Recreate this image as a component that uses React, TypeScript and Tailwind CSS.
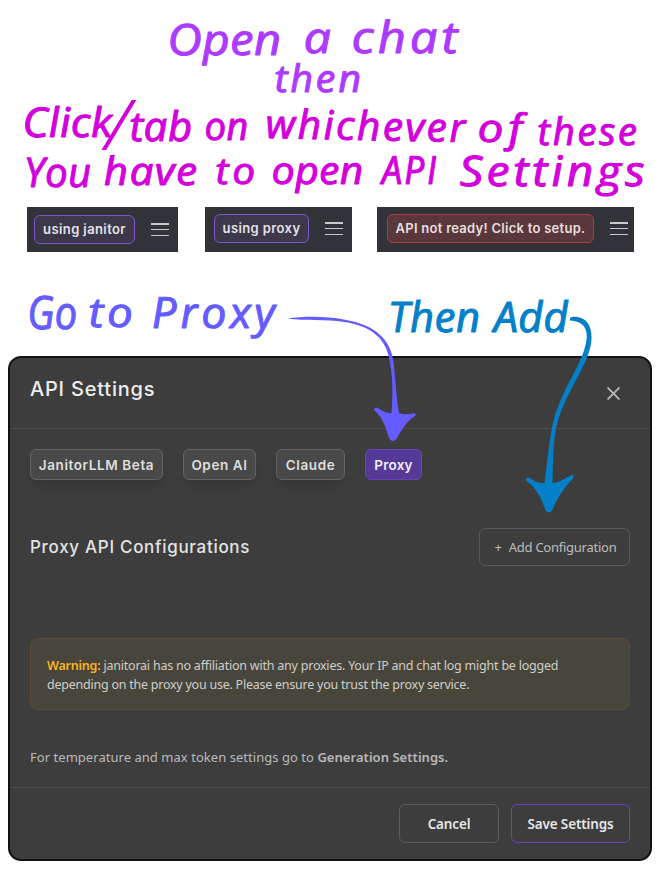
import React from "react";

type WordProps = {
  children: string;
  x: number;
  y: number;
  w: number;
  size: number;
  tilt?: number;
  gap?: number;
};

function Word({ children, x, y, w, size, tilt = 0, gap = 0 }: WordProps) {
  return (
    <text
      x={0}
      y={0}
      textLength={w}
      lengthAdjust="spacingAndGlyphs"
      letterSpacing={gap}
      fontSize={size}
      transform={`translate(${x + 1} ${y}) rotate(${tilt}) skewX(3)`}
    >
      {children}
    </text>
  );
}

function Menu() {
  return (
    <div className="flex h-[13px] w-[18px] flex-col justify-between">
      <div className="h-[1.5px] bg-[#c9cac9]" />
      <div className="h-[1.5px] bg-[#c9cac9]" />
      <div className="h-[1.5px] bg-[#c9cac9]" />
    </div>
  );
}

const hand =
  "font-['Open_Sans','Noto_Sans',sans-serif] italic [stroke-linejoin:round] block overflow-visible";
const tech = "font-['Inter','Roboto',sans-serif]";
const tab =
  "flex h-[31px] items-center justify-center rounded-md border border-[#646464] bg-[#494949] pt-[2px] text-[13.5px] font-semibold text-[#dedede] shadow-lg whitespace-nowrap";

export default function App() {
  return (
    <div className="h-[880px] w-[660px] overflow-hidden bg-white font-['Noto_Sans','Open_Sans',sans-serif]">
      <svg width="660" height="207" viewBox="0 0 660 207" className={hand}>
        <g fill="#ad3bff" stroke="#ad3bff" strokeWidth="1">
          <Word x={167} y={55} w={114} size={43}>Open</Word>
          <Word x={303} y={53} w={28} size={43}>a</Word>
          <Word x={351} y={53} w={110} size={44} gap={3}>chat</Word>
          <Word x={274} y={92} w={89} size={38} gap={2}>then</Word>
        </g>
        <g fill="#d400dc" stroke="#d400dc" strokeWidth="1">
          <Word x={22} y={137} w={90} size={41}>Click</Word>
          <text x={0} y={0} fontSize={70} strokeWidth={0} transform="translate(104 150) skewX(-9) scale(.8 1)">/</text>
          <Word x={129} y={141} w={63} size={41}>tab</Word>
          <Word x={204} y={140} w={44} size={39}>on</Word>
          <Word x={265} y={138} w={202} size={40} tilt={1.2} gap={2}>whichever</Word>
          <Word x={477} y={142} w={50} size={39} gap={4}>of</Word>
          <Word x={537} y={145} w={102} size={38} gap={2}>these</Word>
          <Word x={24} y={187} w={67} size={41}>You</Word>
          <Word x={103} y={185} w={95} size={39} gap={1}>have</Word>
          <Word x={215} y={184} w={43} size={37} gap={3}>to</Word>
          <Word x={271} y={184} w={92} size={38}>open</Word>
          <Word x={381} y={184} w={57} size={39} gap={2}>API</Word>
          <Word x={459} y={186} w={189} size={42} gap={3}>Settings</Word>
        </g>
      </svg>

      <div className={`flex h-[45px] pl-[27px] ${tech}`}>
        <div className="flex w-[151px] items-center justify-between bg-[#323338] pr-[9px] pl-[7px]">
          <div className="flex h-[29px] w-[101px] items-center justify-center rounded-md border border-[#7d57cf] bg-[#3d374a] text-[13px] font-semibold tracking-[0.4px] whitespace-nowrap text-[#e4e2e8]">
            using janitor
          </div>
          <Menu />
        </div>
        <div className="ml-[27px] flex w-[147px] items-center justify-between bg-[#323338] pr-[9px] pb-[2px] pl-[9px]">
          <div className="flex h-[29px] w-[95px] items-center justify-center rounded-md border border-[#7d57cf] bg-[#3d374a] text-[13px] font-semibold tracking-[0.4px] whitespace-nowrap text-[#e4e2e8]">
            using proxy
          </div>
          <Menu />
        </div>
        <div className="ml-[25px] flex w-[257px] items-center justify-between bg-[#323338] pr-[6px] pb-[2px] pl-[10px]">
          <div className="flex h-[29px] w-[207px] items-center justify-center rounded-md border border-[#b03a40] bg-[#59383b] text-[13px] font-semibold tracking-[0.27px] whitespace-nowrap text-[#e8dfdf]">
            API not ready! Click to setup.
          </div>
          <Menu />
        </div>
      </div>

      <svg width="660" height="104" viewBox="0 252 660 104" className={`relative z-10 ${hand}`}>
        <g fill="#655cff" stroke="#655cff">
          <g strokeWidth="1">
            <Word x={27} y={329} w={50} size={46}>Go</Word>
            <Word x={88} y={327} w={48} size={41} gap={3}>to</Word>
            <Word x={151} y={328} w={127} size={43} gap={3}>Proxy</Word>
          </g>
          <path
            stroke="none"
            d="M287 318.5C306 315.8 328 316.5 344 319.5C377 325 391 341 393.5 362C395.500 378 395.500 390 399 413C404 415 409 414 414 413.200Q417 413.500 415 416C407 421 402 429 396.500 439Q393 443 389.500 439C386 429 383 417 374.500 410.500Q373 408 376.500 407.400C382 410 385 413 391.500 413C393 394 393 378 389.500 360C386 339 372 326 344 322C325 319 306 321 287 318.500Z"
          />
        </g>
        <g fill="#0480c9" stroke="#0480c9">
          <g strokeWidth="1">
            <Word x={388} y={332} w={92} size={42}>Then</Word>
            <Word x={493} y={332} w={75} size={42}>Add</Word>
          </g>
          <path
            stroke="none"
            d="M570 318Q571 316.500 576 316.800C587 318 592 326 591.500 339C590 364 568 387 557.500 422C553 439 553 459 552.500 483C560 483 566 477 572 475Q575 475 573 478.500C563 489 558 497 552 510.500Q549 514.500 545.500 510.500C541 497 536 488 526.500 481Q525 477 529 477.500C533 480 538 484 544.500 483C548 458 549 440 553.500 421C563 386 583 364 586.500 340C588 327 582 321 570 320.500Z"
          />
        </g>
      </svg>

      <div className="ml-2 flex h-[505px] w-[644px] flex-col rounded-[13px] border-2 border-[#121214] bg-[#3d3d3d]">
        <div className={`flex h-[71px] items-center justify-between border-b border-[#4e4e4e] pr-[30px] pb-[3px] pl-5 ${tech}`}>
          <h1 className="pb-[5px] text-[20px] font-medium tracking-[0.8px] text-[#ededed]">API Settings</h1>
          <svg width="13" height="13" viewBox="0 0 12 12" className="mt-[3px]">
            <path d="M.5.5l11 11M11.500.5L.5 11.500" stroke="#b9b9b9" strokeWidth="1.7" />
          </svg>
        </div>
        <div className={`flex gap-5 px-5 pt-5 ${tech}`}>
          <div className={`w-[133px] tracking-[0.6px] ${tab}`}>JanitorLLM Beta</div>
          <div className={`w-[73px] tracking-[0.6px] ${tab}`}>Open AI</div>
          <div className={`w-[69px] tracking-[0.6px] ${tab}`}>Claude</div>
          <div className="flex h-[31px] w-[57px] items-center justify-center rounded-md border border-[#6b43bd] bg-[#543a96] pt-[2px] text-[13.5px] font-semibold tracking-[0.2px] whitespace-nowrap text-[#f2effa]">
            Proxy
          </div>
        </div>
        <div className="mt-12 flex h-[38px] items-center justify-between px-5">
          <h2 className={`pt-[2px] text-[17px] font-medium tracking-[0.7px] text-[#e4e4e4] ${tech}`}>Proxy API Configurations</h2>
          <div className="flex h-[38px] w-[151px] items-center justify-center gap-[7px] rounded-md border border-[#575757] pt-[2px] pl-[2px] text-[13px] tracking-[-0.25px] whitespace-nowrap text-[#bdbdbd]">
            <span>+</span>
            <span>Add Configuration</span>
          </div>
        </div>
        <div className="mx-5 mt-[72px] flex h-[72px] flex-col justify-center rounded-lg border border-[#5a4d33] bg-[#48453b] px-4 pt-[2px] text-[12.5px] leading-[19px] whitespace-nowrap text-[#cfcecb]">
          <p className="tracking-[-0.22px]">
            <b className="font-semibold text-[#fbb41f]">Warning:</b> janitorai has no affiliation with any proxies. Your IP and chat log might be logged
          </p>
          <p className="tracking-[-0.24px]">depending on the proxy you use. Please ensure you trust the proxy service.</p>
        </div>
        <p className="mx-5 mt-[37px] h-5 text-[13px] leading-5 tracking-[0.04px] whitespace-nowrap text-[#b9b9b9]">
          For temperature and max token settings go to <b className="font-semibold">Generation Settings.</b>
        </p>
        <div className="mt-5 flex h-[72px] justify-end gap-3 border-t border-[#4e4e4e] pt-4 pr-5 text-[13.5px] font-semibold tracking-[-0.15px] text-[#e6e6e6]">
          <div className="flex h-[39px] w-[100px] items-center justify-center rounded-md border border-[#5b5b5b] pt-[2px]">Cancel</div>
          <div className="flex h-[39px] w-[119px] items-center justify-center rounded-md border border-[#6a43bd] pt-[2px] whitespace-nowrap">Save Settings</div>
        </div>
      </div>
    </div>
  );
}
